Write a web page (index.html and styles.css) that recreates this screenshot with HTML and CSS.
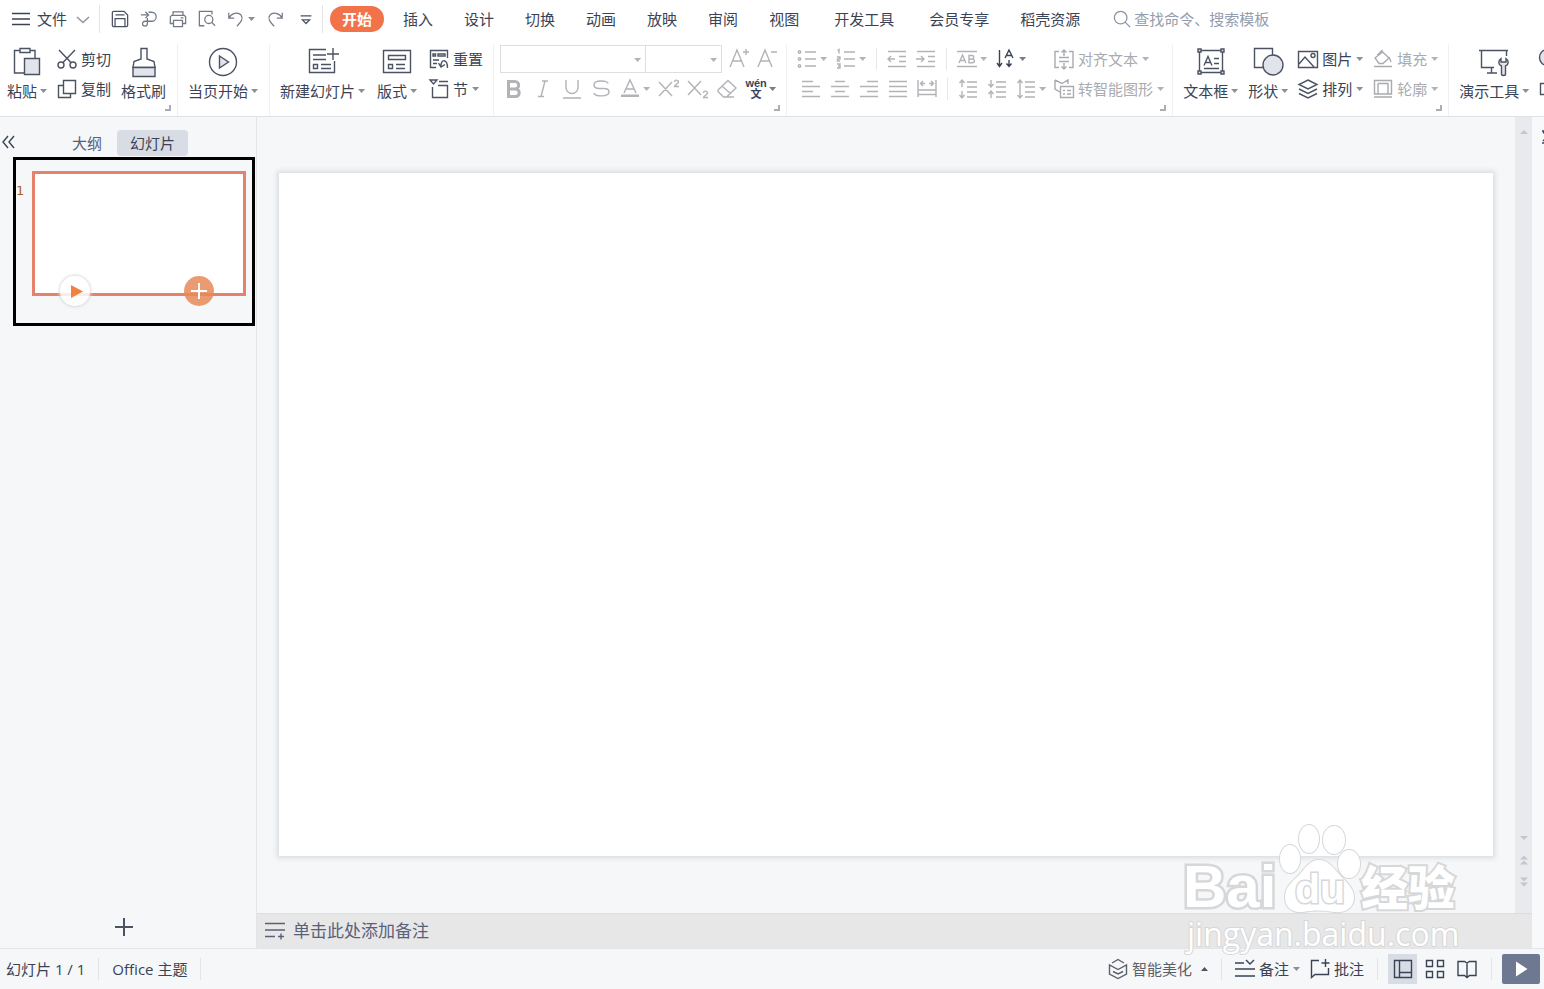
FILE: index.html
```html
<!DOCTYPE html>
<html lang="zh-CN">

<head>
    <meta charset="utf-8">
    <title>WPS 演示</title>
    <meta name="viewport" content="width=device-width, initial-scale=1">
    <link rel="stylesheet" href="styles.css">
</head>

<body>
    <header class="menu-bar">
        <button class="file-menu">
            <svg class="icon" viewBox="0 0 20 20"><path d="M1 4.500h18M1 10h18M1 15.500h18" /></svg>
            文件
            <svg class="icon chevron" viewBox="0 0 20 20"><path d="M4 8l6 5.500L16 8" /></svg>
        </button>
        <span class="divider"></span>
        <div class="quick-access">
            <button aria-label="保存"><svg class="icon dark" viewBox="0 0 20 20"><path d="M3 1.500h11.500l4 4V17a1.500 1.500 0 0 1-1.500 1.500H3A1.500 1.500 0 0 1 1.500 17V3A1.500 1.500 0 0 1 3 1.500zM5 5.500h10M4.500 18V9.500h11V18" /></svg></button>
            <button aria-label="输出为PDF"><svg class="icon" viewBox="0 0 20 20"><path d="M1 5.500h8M6 2l3.500 3.500L6 9M9.500 2.500H13a5 5 0 0 1 0 10H5.500a2.700 2.700 0 1 0 2.700 2.700V9" /></svg></button>
            <button aria-label="打印"><svg class="icon" viewBox="0 0 20 20"><path d="M4.500 6V2h11v4M5 15H1.500V7.500L3 6h14l1.500 1.500V15H15M5 11.500h10v7H5zM13 8.800h3" /></svg></button>
            <button aria-label="打印预览"><svg class="icon" viewBox="0 0 20 20"><path d="M7 17.500H1.500v-16h14V5" /><circle cx="12" cy="10.500" r="4.500" /><path d="M15.200 13.800L19 17.500" /></svg></button>
            <button class="split" aria-label="撤销"><svg class="icon" viewBox="0 0 20 20"><path d="M2 3v6h6M2 9C5 3.500 12 1.500 15.500 5.500c3 4 .5 7.500-4.500 12.500" /></svg><span class="caret"></span></button>
            <button aria-label="恢复"><svg class="icon" viewBox="0 0 20 20"><path d="M18 3v6h-6M18 9C15 3.500 8 1.500 4.500 5.500c-3 4-.5 7.500 4.500 12.500" /></svg></button>
            <button class="more" aria-label="自定义快速访问工具栏"><svg class="icon dark" viewBox="0 0 20 20"><path d="M4 6.500h12M6 11l4 4 4-4z" /></svg></button>
        </div>
        <span class="divider"></span>
        <nav class="tabs">
            <a href="#" class="active">开始</a>
            <a href="#">插入</a>
            <a href="#">设计</a>
            <a href="#">切换</a>
            <a href="#">动画</a>
            <a href="#">放映</a>
            <a href="#">审阅</a>
            <a href="#">视图</a>
            <a href="#" class="wide">开发工具</a>
            <a href="#" class="wide">会员专享</a>
            <a href="#">稻壳资源</a>
        </nav>
        <label class="search">
            <svg class="icon" viewBox="0 0 20 20"><circle cx="8.500" cy="8.500" r="7" /><path d="M13.500 13.500L19 19" /></svg>
            <input type="text" placeholder="查找命令、搜索模板" aria-label="查找命令、搜索模板">
        </label>
    </header>

    <div class="ribbon">
        <section class="group clipboard">
            <button class="big">
                <svg class="icon-lg" viewBox="0 0 30 30"><path d="M8 3.500H2.500V26H12M18 3.500h5V11M8 1.500h10v4H8z" /><path class="fill" d="M12.500 11.500h15v16h-15z" /></svg>
                <span>粘贴<i class="caret"></i></span>
            </button>
            <div class="stack">
                <button class="small"><svg class="icon" viewBox="0 0 20 20"><path d="M2 1l12.500 13M18 1L5.500 14" /><circle cx="4" cy="16" r="3" /><circle cx="16" cy="16" r="3" /></svg>剪切</button>
                <button class="small"><svg class="icon" viewBox="0 0 20 20"><path d="M6 6.500H1.500v12h12V15M6.500 1.500h12v13h-12z" /></svg>复制</button>
            </div>
            <button class="big">
                <svg class="icon-lg" viewBox="0 0 30 30"><path d="M12 12V1.500h6V12l7 2.500 1 6H4l1-6z" /><path class="fill" d="M4 20.500h22v9H4z" /></svg>
                <span>格式刷</span>
            </button>
            <i class="corner"></i>
        </section>

        <section class="group present">
            <button class="big">
                <svg class="icon-lg" viewBox="0 0 30 30"><circle cx="15" cy="15" r="13.500" /><path class="fill" d="M11.500 9v12l9-6z" /></svg>
                <span>当页开始<i class="caret"></i></span>
            </button>
        </section>

        <section class="group slides">
            <button class="big">
                <svg class="icon-lg" viewBox="0 0 30 30"><path d="M18 2.500H1.500v23h25V14M5 8h13M5 12.500h13M5.500 17.500h4v4h-4zM13 17.500h10M13 21.500h10M25 1v12M19 7h12" /></svg>
                <span>新建幻灯片<i class="caret"></i></span>
            </button>
            <button class="big">
                <svg class="icon-lg" viewBox="0 0 30 30"><path d="M1.500 3.500h27v22h-27zM6.500 8.500h17v4h-17zM6.500 17.500h4v4h-4zM14 17.500h9M14 21.500h9" /></svg>
                <span>版式<i class="caret"></i></span>
            </button>
            <div class="stack">
                <button class="small"><svg class="icon" viewBox="0 0 20 20"><path d="M7 18.500H1.500v-17h17V9M4 5h2.500v2H4zM9 5h7v2H9zM4 11h6M4 14.500h4M9.500 14l2.500 4 4-2.500M12 17.500c-.5-8 6.500-8 6.500 1.500" /></svg>重置</button>
                <button class="small"><svg class="icon" viewBox="0 0 20 20"><path d="M1 1h7L4.500 5zM10 2.500h9M3.500 8v10.500h15v-12H9" /></svg>节<i class="caret"></i></button>
            </div>
        </section>

        <section class="group font">
            <div class="row">
                <div class="combo">
                    <label class="family"><select aria-label="字体"><option></option></select><i class="caret"></i></label>
                    <label class="size"><select aria-label="字号"><option></option></select><i class="caret"></i></label>
                </div>
                <button class="tool" aria-label="增大字号"><svg class="icon" viewBox="0 0 20 20"><path d="M0 18L7 1l7 17M3 12h8M13 3h6M16 0v6" /></svg></button>
                <button class="tool" aria-label="减小字号"><svg class="icon" viewBox="0 0 20 20"><path d="M0 18L7 1l7 17M3 12h8M13 3h6" /></svg></button>
            </div>
            <div class="row formats">
                <button class="tool" aria-label="加粗"><svg class="icon bold" viewBox="0 0 20 20"><path d="M4.500 2.500H11a3.700 3.700 0 0 1 0 7.400H4.500zM4.500 10H12a3.800 3.800 0 0 1 0 7.500H4.500z" /></svg></button>
                <button class="tool" aria-label="倾斜"><svg class="icon" viewBox="0 0 20 20"><path d="M9 2h6M5 17.500h6M12 2L8 17.500" /></svg></button>
                <button class="tool" aria-label="下划线"><svg class="icon" viewBox="0 0 20 20"><path d="M4 1v7.500a6 6 0 0 0 12 0V1M1 19h18" /></svg></button>
                <button class="tool" aria-label="删除线"><svg class="icon" viewBox="0 0 20 20"><path d="M17 4.500C17 1 3 1 3 5.500c0 3 2 4 5 4h5c3 0 5 1 5 3.500 0 5-15 5-15 1" /></svg></button>
                <button class="tool split" aria-label="字体颜色"><svg class="icon" viewBox="0 0 20 20"><path d="M4 14L10 1l6 13M6 10h8" /><path class="solid" d="M1 15.500h18v2.500H1z" /></svg><i class="caret"></i></button>
                <button class="tool" aria-label="上标"><svg class="icon" viewBox="0 0 20 20"><path d="M0 3l13 14M13 3L0 17M15.500 3c0-3 4-2 4 0 0 1.500-4 3-4 4.500h4.500" /></svg></button>
                <button class="tool" aria-label="下标"><svg class="icon" viewBox="0 0 20 20"><path d="M0 2l13 14M13 2L0 16M15.500 14c0-3 4-2 4 0 0 1.500-4 3-4 4.500h4.500" /></svg></button>
                <button class="tool" aria-label="清除格式"><svg class="icon" viewBox="0 0 20 20"><path d="M1 11L11 1.500l8 7.500-9.500 9H6.500L1 12.500zM5.500 7.500l8 7M9 18h8" /></svg></button>
                <button class="tool split enabled pinyin" aria-label="拼音指南"><span><b>wén</b><b>文</b></span><i class="caret"></i></button>
            </div>
            <i class="corner"></i>
        </section>

        <section class="group paragraph">
            <div class="stack">
                <div class="row">
                    <button class="tool split" aria-label="项目符号"><svg class="icon" viewBox="0 0 20 20"><circle cx="2.500" cy="3" r="1.200" /><circle cx="2.500" cy="10" r="1.200" /><circle cx="2.500" cy="17" r="1.200" /><path d="M8 3h11M8 10h11M8 17h11" /></svg><i class="caret"></i></button>
                    <button class="tool split" aria-label="编号"><svg class="icon" viewBox="0 0 20 20"><path d="M1.500 1.500L3 .5v4M1 8h3v2H1.500v2H4M1 15h3v4H1M2 17h2M8 3h11M8 10h11M8 17h11" /></svg><i class="caret"></i></button>
                    <span class="sep"></span>
                    <button class="tool" aria-label="减少缩进量"><svg class="icon" viewBox="0 0 20 20"><path d="M1 2.500h18M12 7.500h7M12 12.500h7M1 17.500h18M8 10H1M4 7l-3 3 3 3" /></svg></button>
                    <button class="tool" aria-label="增加缩进量"><svg class="icon" viewBox="0 0 20 20"><path d="M1 2.500h18M12 7.500h7M12 12.500h7M1 17.500h18M0 10h8M5 7l3 3-3 3" /></svg></button>
                    <span class="sep"></span>
                    <button class="tool split" aria-label="文字排列"><svg class="icon" viewBox="0 0 20 20"><path d="M0 2.500h20M0 17.500h20M2 14l3.500-8L9 14M3.500 11.500h4M12 6.500h3a1.700 1.700 0 0 1 0 3.500h-3zM12 10h3.500a1.700 1.700 0 0 1 0 3.700H12z" /></svg><i class="caret"></i></button>
                    <button class="tool split enabled" aria-label="文字方向"><svg class="icon" viewBox="0 0 20 20"><path d="M3.500 1v16M1 14l2.500 3.500L6 14M9 9l4-8 4 8M10.500 6.500h5M13 11v6M10.500 14.500l2.500 3 2.500-3" /></svg><i class="caret"></i></button>
                </div>
                <div class="row aligns">
                    <button class="tool" aria-label="左对齐"><svg class="icon" viewBox="0 0 20 20"><path d="M1 2.500h11M1 7.500h18M1 12.500h11M1 17.500h18" /></svg></button>
                    <button class="tool" aria-label="居中对齐"><svg class="icon" viewBox="0 0 20 20"><path d="M5 2.500h10M1 7.500h18M5 12.500h10M1 17.500h18" /></svg></button>
                    <button class="tool" aria-label="右对齐"><svg class="icon" viewBox="0 0 20 20"><path d="M8 2.500h11M1 7.500h18M8 12.500h11M1 17.500h18" /></svg></button>
                    <button class="tool" aria-label="两端对齐"><svg class="icon" viewBox="0 0 20 20"><path d="M1 2.500h18M1 7.500h18M1 12.500h18M1 17.500h18" /></svg></button>
                    <button class="tool" aria-label="分散对齐"><svg class="icon" viewBox="0 0 20 20"><path d="M1 1v17M19 1v17M4 4.500h4M12 4.500h4M6 2L3.500 4.500 6 7M14 2l2.500 2.500L14 7M1 11h18M1 15.500h18" /></svg></button>
                    <span class="sep"></span>
                    <button class="tool" aria-label="增大行距"><svg class="icon" viewBox="0 0 20 20"><path d="M9 3h10M9 8h10M9 13h10M9 18h10M4 8V1M1.500 4L4 1l2.500 3M4 12v7M1.500 16L4 19l2.500-3" /></svg></button>
                    <button class="tool" aria-label="减小行距"><svg class="icon" viewBox="0 0 20 20"><path d="M9 3h10M9 8h10M9 13h10M9 18h10M4 1v7M1.500 5L4 8l2.500-3M4 19v-7M1.500 15L4 12l2.500 3" /></svg></button>
                    <button class="tool split" aria-label="行距"><svg class="icon" viewBox="0 0 20 20"><path d="M9 3h10M9 8h10M9 13h10M9 18h10M4 1v18M1.500 4L4 1l2.500 3M1.500 16L4 19l2.500-3" /></svg><i class="caret"></i></button>
                </div>
            </div>
            <div class="stack">
                <button class="small off"><svg class="icon" viewBox="0 0 20 20"><path d="M5 2.500H1v16h4M15 2.500h4v16h-4M5 8.500h10M5 12.500h10M10 7V1M7.500 3.500L10 1l2.500 2.500M10 14v6M7.500 17.500L10 20l2.500-2.500" /></svg>对齐文本<i class="caret"></i></button>
                <button class="small off"><svg class="icon" viewBox="0 0 20 20"><path d="M1 1l7 3.500L14 1v4M1 1v9l5 3M6.500 7.500h13v11h-13zM9 11.500h2M13 11.500h4M9 15h2M13 15h4" /></svg>转智能图形<i class="caret"></i></button>
            </div>
            <i class="corner"></i>
        </section>

        <section class="group drawing">
            <button class="big">
                <svg class="icon-lg" viewBox="0 0 30 30"><path d="M3.500 3.500h23v22h-23zM8 18.500l4-9 4 9M9.500 15.500h5M18 11.500h5M18 16.500h5M8 21.500h15" /><path class="fill" d="M2 2h3v3H2zM25 2h3v3h-3zM2 24h3v3H2zM25 24h3v3h-3z" /></svg>
                <span>文本框<i class="caret"></i></span>
            </button>
            <button class="big">
                <svg class="icon-lg" viewBox="0 0 30 30"><path d="M1.500 1.500h18v19h-18z" /><circle class="fill" cx="20" cy="18" r="10" /></svg>
                <span>形状<i class="caret"></i></span>
            </button>
            <div class="stack">
                <button class="small"><svg class="icon" viewBox="0 0 20 20"><path d="M.5 2.500h19v16H.5zM1 15l6-7 9 10" /><circle cx="15" cy="6.500" r="2" /></svg>图片<i class="caret"></i></button>
                <button class="small"><svg class="icon" viewBox="0 0 20 20"><path d="M10 1l9 4.500-9 4.500-9-4.500zM1 10l9 4.500 9-4.500M1 14.500L10 19l9-4.500" /></svg>排列<i class="caret"></i></button>
            </div>
            <div class="stack">
                <button class="small off"><svg class="icon" viewBox="0 0 20 20"><path d="M9 1v3M2 9l7.500-6 6.500 6-6 5.500H6zM4 6.500L9.500 1M16 8l2 5M1 17.500h18" /></svg>填充<i class="caret"></i></button>
                <button class="small off"><svg class="icon" viewBox="0 0 20 20"><path d="M1.500 1.500h17V15h-17zM5 4.500h10V15M5 4.500V15M1 18h18" /></svg>轮廓<i class="caret"></i></button>
            </div>
            <i class="corner"></i>
        </section>

        <section class="group">
            <button class="big">
                <svg class="icon-lg" viewBox="0 0 30 30"><path d="M0 3.500h29M2.500 3.500v17H15M27.500 3.500V9M12.500 21v5M8 26h10" /><path class="fill" d="M22 11.500c-3 2-3 6 .5 7.500v8c0 2 4 2 4 0v-8c3.500-1.500 3.500-5.500 .5-7.500V15h-5z" /></svg>
                <span>演示工具<i class="caret"></i></span>
            </button>
            <div class="stack">
                <button class="small" aria-label="查找"><svg class="icon" viewBox="0 0 20 20"><circle class="fill" cx="8.500" cy="8.500" r="8" /><path d="M14 14l5 5" /></svg></button>
                <button class="small" aria-label="选择"><svg class="icon" viewBox="0 0 20 20"><path d="M1.500 4.500h15v11h-15z" /></svg></button>
            </div>
        </section>
    </div>

    <main class="main">
        <aside class="sidebar">
            <div class="sidebar-tabs">
                <button class="collapse" aria-label="收起"><svg class="icon" viewBox="0 0 20 20"><path d="M8 3l-5 6 5 6M14 3l-5 6 5 6" /></svg></button>
                <button class="pane-tab">大纲</button>
                <button class="pane-tab active">幻灯片</button>
            </div>
            <div class="slide-item">
                <span class="number">1</span>
                <div class="thumb">
                    <button class="round play" aria-label="播放"><svg viewBox="0 0 30 30"><path d="M11 9v13l12-6.500z" /></svg></button>
                    <button class="round add" aria-label="添加"><svg viewBox="0 0 30 30"><path d="M15 7v16M7 15h16" /></svg></button>
                </div>
            </div>
            <button class="new-slide" aria-label="新建幻灯片"><svg class="icon" viewBox="0 0 20 20"><path d="M10 1v18M1 10h18" /></svg></button>
        </aside>

        <div class="editor">
            <div class="canvas-row">
                <div class="canvas">
                    <div class="slide"></div>
                </div>
                <div class="scrollbar">
                    <svg viewBox="0 0 10 10"><path d="M1 7h8L5 3z" /></svg>
                    <div class="scroll-bottom">
                        <svg viewBox="0 0 10 10"><path d="M1 3h8L5 7z" /></svg>
                        <svg viewBox="0 0 10 10"><path d="M1 4.500h8L5 .5zM1 9.500h8l-4-4z" /></svg>
                        <svg viewBox="0 0 10 10"><path d="M1 .5h8l-4 4zM1 5.500h8l-4 4z" /></svg>
                    </div>
                </div>
            </div>
            <div class="notes">
                <svg class="icon" viewBox="0 0 20 20"><path d="M0 2.500h20M0 9h20M0 15.500h10M16 12.500v6M13 15.500h6" /></svg>
                单击此处添加备注
            </div>
        </div>

        <div class="side-strip">
            <svg viewBox="0 0 12 16"><path d="M10 2h4M11 3l4 4M10 14h5M11 12l5-5" /></svg>
        </div>
    </main>

    <footer class="status-bar">
        <span class="page">幻灯片 1 / 1</span>
        <span class="divider"></span>
        <span>Office 主题</span>
        <span class="divider"></span>
        <div class="status-right">
            <button class="beautify"><svg class="icon" viewBox="0 0 20 20"><path d="M4 4l6-3.500L16 4M1.500 6v9l8.500 4.500 8.500-4.500V6L10 10.500zM5 12.500L10 15l5-2.500" /></svg>智能美化<i class="caret up"></i></button>
            <span class="divider"></span>
            <button><svg class="icon" viewBox="0 0 20 20"><path d="M0 4h9M11 1l4 4 4-4M0 10h20M0 17h20" /></svg>备注<i class="caret"></i></button>
            <button><svg class="icon" viewBox="0 0 20 20"><path d="M9 1.500H1.500v17l3.500-3h13.500V9M15.500 0v8M11.500 4h8" /></svg>批注</button>
            <span class="divider"></span>
            <div class="views">
                <button class="view active" aria-label="普通视图"><svg class="icon" viewBox="0 0 20 20"><path d="M1.500 1.500h17v17h-17zM6.500 1.500v17M6.500 13.500h12" /></svg></button>
                <button class="view" aria-label="幻灯片浏览"><svg class="icon" viewBox="0 0 20 20"><path d="M1.500 1.500h6v6h-6zM12.500 1.500h6v6h-6zM1.500 12.500h6v6h-6zM12.500 12.500h6v6h-6z" /></svg></button>
                <button class="view" aria-label="阅读视图"><svg class="icon" viewBox="0 0 20 20"><path d="M1 2.500h6.500L10 4l2.500-1.500H19v14h-6.500L10 18.500l-2.500-2H1zM10 4v14" /></svg></button>
            </div>
            <span class="divider"></span>
            <button class="show" aria-label="放映"><svg viewBox="0 0 20 20"><path d="M5 2.500v15L16.500 10z" /></svg></button>
        </div>
    </footer>

    <svg class="watermark" viewBox="0 0 280 138">
        <text class="brand" x="2" y="87">Bai</text>
        <ellipse cx="109" cy="39" rx="10" ry="14" />
        <ellipse cx="128" cy="19" rx="10" ry="14" />
        <ellipse cx="153" cy="20" rx="11" ry="14" />
        <ellipse cx="168" cy="44" rx="11" ry="14" />
        <path d="M138 40c-9 0-13 7-19 14-8 8-15 13-15 23 0 12 9 16 18 15 11-2 21-2 31 0 12 1 20-4 20-15 0-9-8-15-15-23-6-7-11-14-20-14z" />
        <text class="du" x="114" y="83">du</text>
        <text class="cn" x="180" y="85">经验</text>
        <text class="url" x="6" y="126">jingyan.baidu.com</text>
    </svg>
</body>

</html>
```
FILE: styles.css
```css
:root {
    --text: #3a4356;
    --icon: #4b5262;
    --muted: #b2b3b7;
    --line: #e2e4e8;
    --panel: #f5f7f9;
    --active: #d8dde5;
    --accent: #f2724a;
}

* {
    box-sizing: border-box;
}

body {
    margin: 0;
    height: 100vh;
    display: flex;
    flex-direction: column;
    overflow: hidden;
    position: relative;
    background: #fff;
    color: var(--text);
    font-family: "Open Sans", "Noto Sans CJK SC", sans-serif;
    font-size: 15px;
    line-height: 22px;
}

button, input, select {
    font: inherit;
    color: inherit;
    border: none;
    background: none;
    padding: 0;
    margin: 0;
}

button {
    display: flex;
    align-items: center;
    white-space: nowrap;
    flex-shrink: 0;
    cursor: pointer;
}

svg {
    display: block;
    flex-shrink: 0;
    overflow: visible;
    fill: none;
    stroke: currentColor;
    stroke-width: 1.4;
}

.icon {
    width: 20px;
    height: 20px;
}

.icon-lg {
    width: 30px;
    height: 30px;
    stroke: var(--icon);
}

.fill {
    fill: #e1e4eb;
}

.solid {
    fill: currentColor;
    stroke: none;
}

.caret {
    flex-shrink: 0;
    width: 7px;
    height: 4px;
    background: #8a8f99;
    clip-path: polygon(0 0, 100% 0, 50% 100%);
}

.caret.up {
    background: var(--icon);
    clip-path: polygon(0 100%, 100% 100%, 50% 0);
}

/* menu bar */
.menu-bar {
    display: flex;
    align-items: center;
    height: 38px;
    flex-shrink: 0;
    padding-left: 11px;
}

.divider {
    width: 1px;
    height: 22px;
    flex-shrink: 0;
    background: var(--line);
}

.menu-bar .divider {
    height: 28px;
}

.file-menu {
    gap: 6px;
    margin-right: 6px;
}

.chevron {
    color: #8d94a0;
}

.quick-access {
    display: flex;
    align-items: center;
    gap: 11px;
    padding: 0 7px 0 11px;
    color: #737a86;
}

.quick-access .icon {
    width: 18px;
    height: 18px;
}

.quick-access .split {
    gap: 3px;
}

.quick-access .more {
    padding-left: 2px;
}

.quick-access .dark {
    color: var(--icon);
}

.tabs {
    display: flex;
    gap: 7px;
    padding-left: 7px;
    flex-shrink: 0;
}

.tabs a {
    padding: 2px 12px;
    border-radius: 13px;
    color: var(--text);
    text-decoration: none;
    white-space: nowrap;
}

.tabs .wide {
    margin-left: 4px;
}

.tabs .active {
    background: var(--accent);
    color: #fff;
    font-weight: bold;
}

.search {
    display: flex;
    align-items: center;
    gap: 3px;
    flex-grow: 1;
    padding-left: 21px;
    color: #8b94a3;
}

.search .icon {
    width: 18px;
    height: 18px;
}

.search input {
    flex-grow: 1;
    min-width: 0;
}

.search input::placeholder {
    color: #949dad;
    opacity: 1;
}

/* ribbon */
.ribbon {
    display: flex;
    height: 78px;
    flex-shrink: 0;
    padding-top: 6px;
    overflow: hidden;
}

.group {
    display: flex;
    flex-shrink: 0;
    gap: 10px;
    padding: 0 10px;
    border-right: 1px solid #eff0f3;
    position: relative;
}

.group.clipboard {
    padding: 0 11px 0 7px;
}

.group.present {
    padding-right: 11px;
}

.group.slides {
    gap: 12px;
}

.group.font {
    flex-direction: column;
    gap: 0;
    padding: 0 8px 0 6px;
}

.group.paragraph {
    gap: 8px;
    padding-right: 8px;
}

.corner {
    position: absolute;
    right: 6px;
    bottom: 5px;
    width: 6px;
    height: 6px;
    border: solid #a9adb5;
    border-width: 0 2px 2px 0;
}

.big {
    flex-direction: column;
    gap: 3px;
    padding-top: 3px;
    align-self: flex-start;
}

.big span {
    display: flex;
    align-items: center;
    gap: 3px;
}

.stack {
    display: flex;
    flex-direction: column;
    flex-shrink: 0;
}

.small {
    height: 30px;
    gap: 4px;
}

.small .icon {
    color: var(--icon);
}

.off, .off .icon {
    color: #a9abb0;
}

.off .caret, .tool .caret {
    background: var(--muted);
}

.row {
    display: flex;
    align-items: center;
    height: 30px;
    gap: 9px;
}

.font .row:first-child {
    gap: 8px;
}

.formats, .aligns {
    padding-left: 4px;
}

.tool {
    color: var(--muted);
}

.tool.split {
    gap: 3px;
}

.tool.enabled {
    color: var(--text);
}

.tool.enabled .caret {
    background: #777d89;
}

.bold {
    stroke-width: 3;
}

.sep {
    width: 1px;
    height: 22px;
    margin: 0 1px;
    background: #e6e7ea;
}

.combo {
    display: flex;
    border: 1px solid #dcdee2;
}

.combo label {
    position: relative;
    height: 26px;
}

.combo .family {
    width: 144px;
}

.combo .size {
    width: 76px;
    border-left: 1px solid #dcdee2;
}

.combo select {
    appearance: none;
    width: 100%;
    height: 100%;
}

.combo .caret {
    position: absolute;
    right: 4px;
    top: 12px;
    background: var(--muted);
}

.pinyin span {
    width: 20px;
    display: flex;
    flex-direction: column;
    align-items: center;
    font-family: "Liberation Sans", "Noto Sans CJK SC", sans-serif;
    font-size: 11px;
    line-height: 11px;
}

.pinyin b {
    font-weight: bold;
}

/* main area */
.main {
    display: flex;
    flex-grow: 1;
    min-height: 0;
    background: var(--panel);
    border-top: 1px solid #e0e2e6;
}

.sidebar {
    width: 257px;
    flex-shrink: 0;
    display: flex;
    flex-direction: column;
    border-right: 1px solid var(--line);
}

.sidebar-tabs {
    display: flex;
    align-items: center;
    padding: 13px 0 1px;
}

.collapse {
    margin-right: 39px;
}

.pane-tab {
    height: 26px;
    padding: 0 13px;
    border-radius: 4px;
    color: #57607a;
}

.pane-tab + .pane-tab {
    margin-left: 2px;
}

.pane-tab.active {
    background: var(--active);
    color: var(--text);
}

.slide-item {
    display: flex;
    margin: 0 1px 0 13px;
    padding: 11px 6px 27px 0;
    border: 3px solid #000;
}

.number {
    width: 16px;
    padding-top: 9px;
    color: #a8611f;
    font-family: "DejaVu Sans", sans-serif;
    font-size: 13px;
}

.thumb {
    flex-grow: 1;
    aspect-ratio: 214 / 125;
    position: relative;
    background: #fff;
    border: 3px solid #e5826b;
}

.round {
    position: absolute;
    bottom: -13px;
    width: 30px;
    height: 30px;
    border-radius: 50%;
}

.round.play {
    left: 25px;
    background: rgba(255, 255, 255, 0.85);
    box-shadow: 0 0 3px 1px #dcd8d8;
}

.round.play path {
    fill: #f2803f;
    stroke: none;
}

.round.add {
    right: 29px;
    background: rgba(232, 138, 88, 0.85);
    color: #fff;
}

.round.add svg {
    stroke-width: 2;
}

.round svg {
    width: 30px;
    height: 30px;
}

.new-slide {
    margin: auto auto 11px 114px;
    color: var(--icon);
}

.new-slide svg {
    stroke-width: 2;
}

.editor {
    flex-grow: 1;
    min-width: 0;
    display: flex;
    flex-direction: column;
}

.canvas-row {
    flex-grow: 1;
    display: flex;
}

.canvas {
    flex-grow: 1;
    display: flex;
    padding: 56px 22px 57px;
}

.slide {
    flex-grow: 1;
    background: #fff;
    box-shadow: 0 0 5px 2px #d9dbdd;
}

.scrollbar {
    width: 17px;
    display: flex;
    flex-direction: column;
    align-items: center;
    justify-content: space-between;
    padding: 10px 0 26px;
    background: #e8eaee;
}

.scrollbar svg {
    width: 10px;
    height: 10px;
    fill: #c3c6cc;
    stroke: none;
}

.scroll-bottom {
    display: flex;
    flex-direction: column;
    gap: 12px;
}

.notes {
    display: flex;
    align-items: center;
    gap: 8px;
    height: 35px;
    padding-left: 8px;
    border-top: 1px solid #dcdddf;
    background: #e7e7e7;
    color: #59617a;
    font-size: 17px;
}

.side-strip {
    width: 12px;
    overflow: hidden;
    padding-top: 12px;
    background: #f8f9fb;
}

.side-strip svg {
    width: 12px;
    height: 16px;
}

/* status bar */
.status-bar {
    display: flex;
    align-items: center;
    height: 41px;
    flex-shrink: 0;
    gap: 13px;
    padding: 0 4px 0 6px;
    background: var(--panel);
    border-top: 1px solid var(--line);
}

.status-right {
    display: flex;
    align-items: center;
    gap: 10px;
    margin-left: auto;
}

.status-right button {
    gap: 4px;
}

.beautify {
    color: #5d6069;
}

.beautify .caret {
    margin-left: 5px;
}

.status-right .divider {
    margin: 0 3px;
}

.views {
    display: flex;
    gap: 3px;
    margin: 0 -3px;
}

.view {
    width: 29px;
    height: 30px;
    justify-content: center;
}

.view.active {
    background: var(--active);
}

.status-right .show {
    width: 38px;
    height: 30px;
    margin-left: -3px;
    justify-content: center;
    border-radius: 2px;
    background: #6e7891;
}

.show svg {
    width: 20px;
    height: 20px;
    fill: #fff;
    stroke: none;
}

/* watermark */
.watermark {
    position: absolute;
    right: 83px;
    bottom: 31px;
    width: 280px;
    height: 138px;
    fill: #fff;
    stroke: #d6d7d8;
    stroke-width: 2;
    paint-order: stroke;
    pointer-events: none;
}

.watermark .brand {
    font-family: "Liberation Sans", sans-serif;
    font-size: 60px;
    font-weight: bold;
    stroke-width: 5;
}

.watermark .du {
    font-family: "Liberation Sans", sans-serif;
    font-size: 41px;
    font-weight: bold;
    stroke-width: 3;
}

.watermark .cn {
    font-size: 47px;
    font-weight: 900;
    stroke-width: 4;
}

.watermark .url {
    font-size: 32px;
    stroke-width: 2;
}
```
